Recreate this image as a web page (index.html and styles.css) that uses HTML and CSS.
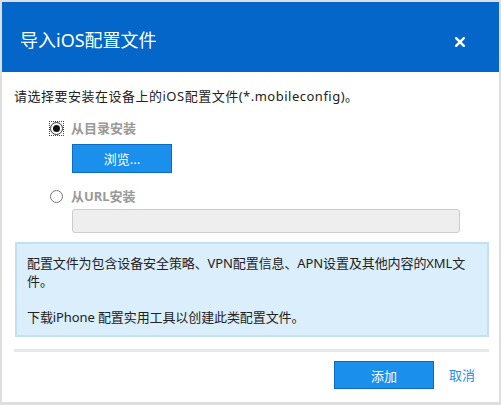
FILE: index.html
```html
<!DOCTYPE html>
<html lang="zh-CN">
<head>
    <meta charset="UTF-8">
    <meta name="viewport" content="width=device-width, initial-scale=1.0">
    <title>导入iOS配置文件</title>
    <link rel="stylesheet" href="styles.css">
</head>
<body>

    <div class="dialog">
        <div class="dialog-header">
            <h1 class="dialog-title">导入iOS配置文件</h1>
            <button class="btn-close" aria-label="关闭">
                <svg width="10" height="10" viewBox="0 0 10 10">
                    <path d="M1.2 1.2 L8.8 8.8 M8.8 1.2 L1.2 8.8" stroke="#fff" stroke-width="2.4" stroke-linecap="square"/>
                </svg>
            </button>
        </div>

        <div class="dialog-body">
            <p class="intro">请选择要安装在设备上的iOS配置文件(*.mobileconfig)。</p>

            <label class="option">
                <span class="radio-wrap focused"><span class="radio checked"></span></span>
                <span class="option-label">从目录安装</span>
            </label>
            <div class="option-content">
                <button class="btn btn-browse">浏览...</button>
            </div>

            <label class="option option-url">
                <span class="radio-wrap"><span class="radio"></span></span>
                <span class="option-label">从URL安装</span>
            </label>
            <div class="option-content option-content-url">
                <input class="url-input" type="text" disabled>
            </div>

            <div class="info">
                <p>配置文件为包含设备安全策略、VPN配置信息、APN设置及其他内容的XML文件。</p>
                <p>下载iPhone 配置实用工具以创建此类配置文件。</p>
            </div>

            <div class="separator"></div>

            <div class="dialog-footer">
                <button class="btn btn-add">添加</button>
                <a class="link-cancel" href="#">取消</a>
            </div>
        </div>
    </div>

</body>
</html>
```

FILE: styles.css
```css
body {
    margin: 0;
    background: #dedede;
    font-family: "Noto Sans", "Noto Sans CJK SC", sans-serif;
    font-size: 13px;
    color: #222;
}

.dialog {
    margin: 2px 2px 0 2px;
    width: 497px;
    height: 400px;
    background: #fff;
}

.dialog-header {
    height: 70px;
    background: #0466c8;
    display: flex;
    align-items: center;
    justify-content: space-between;
    padding: 6px 0 0 18px;
    box-sizing: border-box;
}

.dialog-title {
    margin: 0;
    font-size: 18px;
    font-weight: normal;
    color: #fff;
    line-height: 24px;
}

.btn-close {
    background: none;
    border: none;
    padding: 0;
    margin: 4px 34px 0 0;
    width: 10px;
    height: 10px;
    display: flex;
    cursor: pointer;
}

.dialog-body {
    padding: 15px 10px 0 12px;
}

.intro {
    margin: 0;
    line-height: 18px;
    letter-spacing: 0.5px;
}

.option {
    display: flex;
    align-items: center;
    margin: 14px 0 0 36px;
    height: 18px;
}

.option-url {
    margin-top: 14px;
}

.radio-wrap {
    display: flex;
    margin-right: 8px;
}

.radio-wrap.focused {
    outline: 1px dotted #444;
}

.radio {
    width: 11px;
    height: 11px;
    border: 1px solid #777;
    border-radius: 50%;
    box-sizing: content-box;
    display: flex;
    align-items: center;
    justify-content: center;
    background: #fff;
}

.focused .radio {
    border-color: #333;
}

.radio.checked::after {
    content: "";
    width: 7px;
    height: 7px;
    border-radius: 50%;
    background: #111;
}

.option-label {
    font-weight: bold;
    color: #999;
    line-height: 18px;
}

.option-content {
    margin: 7px 0 0 58px;
}

.option-content-url {
    margin-top: 4px;
}

.btn {
    font-family: inherit;
    font-size: 13px;
    color: #fff;
    background: #1a8feb;
    border: 1px solid #0b6cc4;
    cursor: pointer;
    padding: 0;
}

.btn-browse {
    width: 100px;
    height: 29px;
    display: block;
}

.url-input {
    display: block;
    width: 388px;
    height: 24px;
    box-sizing: border-box;
    background: #eee;
    border: 1px solid #ccc;
    border-radius: 3px;
}

.info {
    margin: 9px 0 0 1px;
    background: #dbeefc;
    border: 2px solid #c3e1f5;
    padding: 10px 0 9px 10px;
}

.info p {
    margin: 0;
    line-height: 18px;
    letter-spacing: -0.1px;
}

.info p + p {
    margin-top: 18px;
}

.separator {
    height: 3px;
    background: #e8e8e8;
    margin: 12px 0 0 0;
}

.dialog-footer {
    display: flex;
    justify-content: flex-end;
    align-items: center;
    margin-top: 9px;
    padding-right: 14px;
}

.btn-add {
    width: 100px;
    height: 28px;
}

.link-cancel {
    color: #1a8feb;
    text-decoration: none;
    margin-left: 15px;
    line-height: 18px;
}
```
